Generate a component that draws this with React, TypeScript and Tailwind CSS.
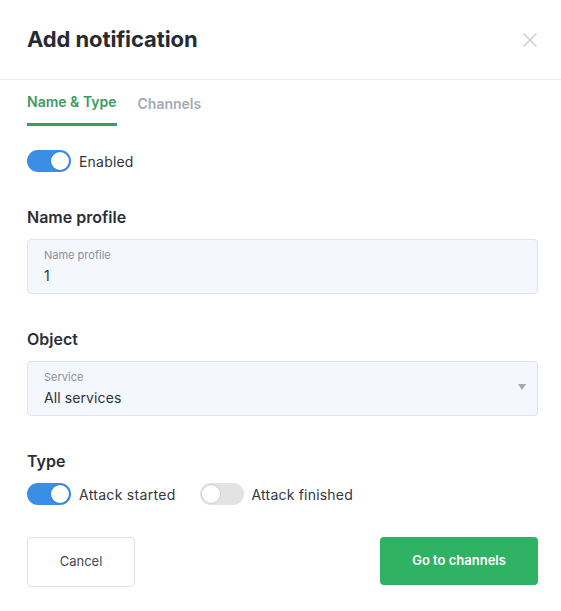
import { useState } from "react";

function Toggle({ on, onClick }: { on: boolean; onClick: () => void }) {
  return (
    <button
      onClick={onClick}
      className={
        "relative block h-[22px] w-[44px] shrink-0 rounded-full transition-colors " +
        (on ? "bg-[#3a8ee6]" : "bg-[#e3e3e3]")
      }
    >
      <span
        className={
          "absolute top-[2px] h-[18px] w-[18px] rounded-full bg-white shadow-[0_0_0_1px_rgba(0,0,0,0.08)] transition-all " +
          (on ? "left-[24px]" : "left-[2px]")
        }
      />
    </button>
  );
}

export default function App() {
  const [enabled, setEnabled] = useState(true);
  const [started, setStarted] = useState(true);
  const [finished, setFinished] = useState(false);

  return (
    <div className="h-[611px] w-[561px] bg-white font-['Inter',sans-serif] text-[#2b2e35]">
      <div className="flex h-[80px] items-center justify-between border-b border-[#eceef1] pl-[27px] pr-[24px]">
        <h1 className="text-[22px] font-bold tracking-[-0.1px] text-[#262a31]">
          Add notification
        </h1>
        <button className="text-[#c9ced6]">
          <svg width="14" height="14" viewBox="0 0 14 14" fill="none">
            <path
              d="M1 1L13 13M13 1L1 13"
              stroke="currentColor"
              strokeWidth="1.5"
              strokeLinecap="round"
            />
          </svg>
        </button>
      </div>

      <div className="pl-[27px] pr-[23px]">
        <div className="flex gap-[21px] text-[14px] font-semibold">
          <button className="border-b-[3px] border-[#3d9a62] pb-[11px] pt-[11px] text-[#3d9a62]">
            Name &amp; Type
          </button>
          <button className="pb-[11px] pt-[11px] text-[#a4a9b3]">Channels</button>
        </div>

        <div className="mt-[24px] flex items-center gap-[8px]">
          <Toggle on={enabled} onClick={() => setEnabled(!enabled)} />
          <span className="text-[14px] tracking-[0.2px] text-[#33363d]">Enabled</span>
        </div>

        <h2 className="mt-[33px] text-[16px] leading-[24px] font-semibold text-[#2b2e35]">
          Name profile
        </h2>
        <div className="mt-[10px] flex h-[55px] flex-col justify-center rounded-[4px] border border-[#dde4ef] bg-[#f4f7fd] px-[16px]">
          <span className="text-[11px] leading-[14px] text-[#8c919b]">Name profile</span>
          <span className="mt-[5px] text-[14px] leading-[18px] text-[#2f3238]">1</span>
        </div>

        <h2 className="mt-[33px] text-[16px] leading-[24px] font-semibold text-[#2b2e35]">
          Object
        </h2>
        <div className="mt-[10px] flex h-[55px] items-center rounded-[4px] border border-[#dde4ef] bg-[#f4f7fd] pl-[16px] pr-[11px]">
          <div className="flex flex-1 flex-col">
            <span className="text-[11px] leading-[14px] text-[#8c919b]">Service</span>
            <span className="mt-[5px] text-[14px] leading-[18px] tracking-[0.1px] text-[#2f3238]">
              All services
            </span>
          </div>
          <svg width="8" height="6" viewBox="0 0 8 6" className="mb-[4px]">
            <path d="M0 0H8L4 6Z" fill="#a3a7ae" />
          </svg>
        </div>

        <h2 className="mt-[33px] text-[16px] leading-[24px] font-semibold text-[#2b2e35]">
          Type
        </h2>
        <div className="mt-[10px] flex h-[22px] items-center">
          <Toggle on={started} onClick={() => setStarted(!started)} />
          <span className="ml-[8px] text-[14px] tracking-[0.3px] text-[#33363d]">
            Attack started
          </span>
          <span className="ml-[24px]">
            <Toggle on={finished} onClick={() => setFinished(!finished)} />
          </span>
          <span className="ml-[8px] text-[14px] tracking-[0.2px] text-[#33363d]">
            Attack finished
          </span>
        </div>

        <div className="mt-[32px] flex items-start justify-between">
          <button className="h-[50px] w-[108px] rounded-[4px] border border-[#dfe2e6] bg-white text-[13px] text-[#454950]">
            Cancel
          </button>
          <button className="h-[48px] w-[158px] rounded-[4px] bg-[#2fb264] text-[13px] font-semibold text-white">
            Go to channels
          </button>
        </div>
      </div>
    </div>
  );
}
